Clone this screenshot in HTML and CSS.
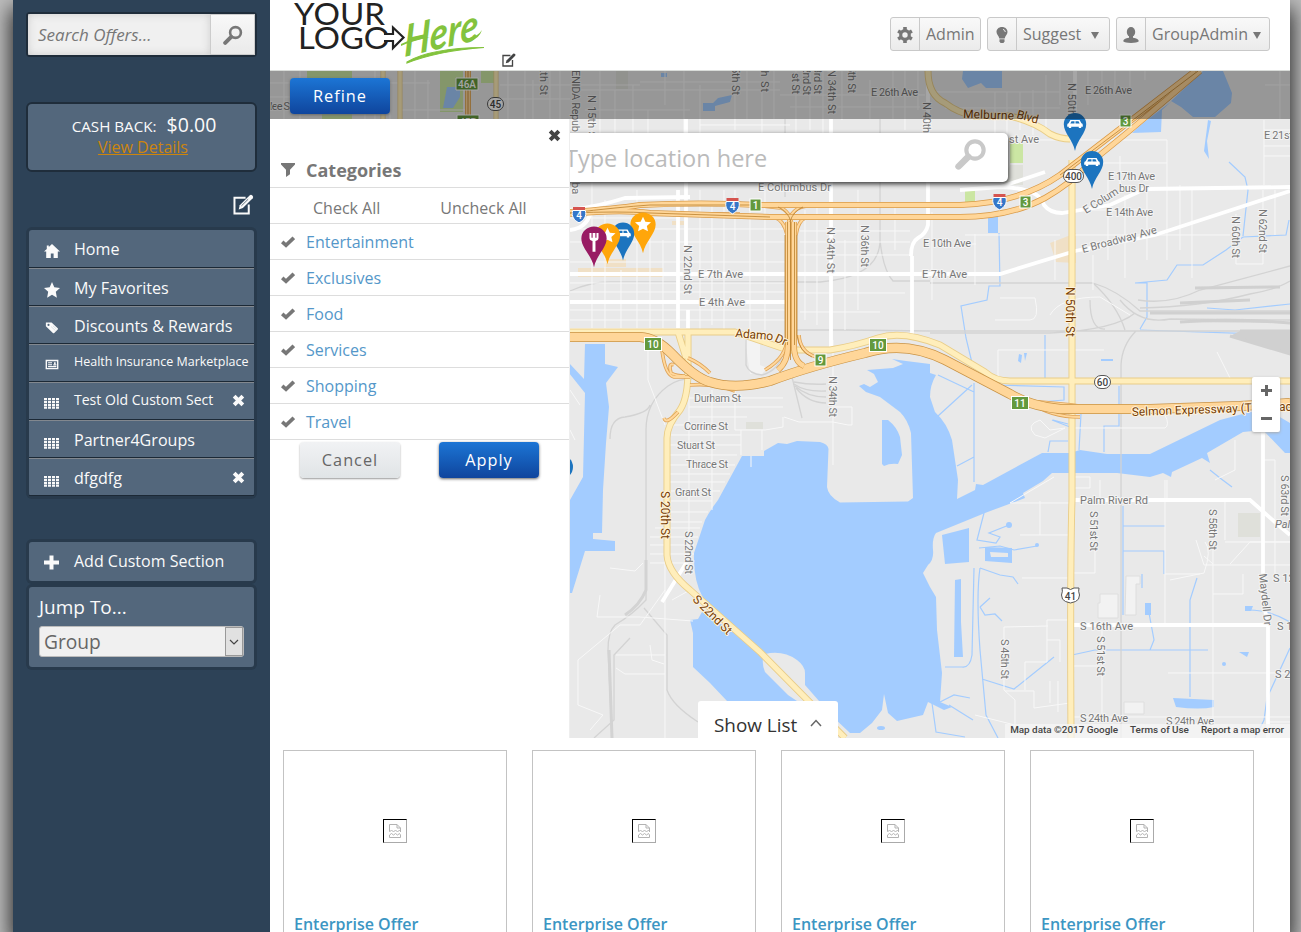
FILE: index.html
```html
<!DOCTYPE html>
<html lang="en">
<head>
<meta charset="utf-8">
<title>Offers</title>
<link rel="stylesheet" href="styles.css">
</head>
<body>
<svg class="defs" aria-hidden="true">
  <defs>
    <symbol id="i-search" viewBox="0 0 20 20"><circle cx="12.5" cy="7.5" r="5.4" fill="none" stroke="currentColor" stroke-width="2.6"/><path d="M8.2 11.8L2.2 17.8" stroke="currentColor" stroke-width="4" stroke-linecap="round"/></symbol>
    <symbol id="i-edit" viewBox="0 0 20 20"><path d="M12 3.6H1.4V18.6H15V10" fill="none" stroke="currentColor" stroke-width="1.9"/><path d="M5.4 14.7L6.4 10.6L16 1.2Q17.2 .2 18.6 1.6Q19.8 3 18.8 4L9.4 13.4z" fill="currentColor"/><path d="M8 11.3l6.4-6.3" stroke="#345" stroke-width=".7"/></symbol>
    <symbol id="i-home" viewBox="0 0 16 16"><path d="M8 1L16 8.6H13.8V15H9.6V10.6H6.8V15H2.2V8.6H0L2.8 6V2.6H4.8V4z" fill="currentColor"/></symbol>
    <symbol id="i-star" viewBox="0 0 16 16"><path d="M8 0l2.3 5.3L16 5.9l-4.2 3.9 1.1 5.9L8 12.7l-4.9 3 1.1-5.9L0 5.900l5.700-.6z" fill="currentColor"/></symbol>
    <symbol id="i-tag" viewBox="0 0 16 16"><path d="M1 2.200H7.500L14.600 8.800Q15.300 9.500 14.500 10.300L10.600 14.200Q9.800 14.900 9 14.200L1 6.600z" fill="currentColor"/><circle cx="4" cy="5" r="1.200" fill="#53677c"/><path d="M7 7l5 4.700M9 6l4 3.700" stroke="#b9c3cd" stroke-width=".6"/></symbol>
    <symbol id="i-news" viewBox="0 0 16 16"><path d="M1.500 3.500H14.500V12.700H1.500z" fill="none" stroke="currentColor" stroke-width="1.600"/><path d="M3.500 6H8M3.500 8.200H8M3.500 10.400H13M9.500 8.400H13" stroke="currentColor" stroke-width="1.200"/><path d="M10.300 5.300H12.200V8H10.300z" fill="currentColor"/></symbol>
    <symbol id="i-grid" viewBox="0 0 15 11"><path d="M0 0h3v2.300H0zM4 0h3v2.300H4zM8 0h3v2.300H8zM12 0h3v2.300h-3zM0 2.900h3v2.200H0zM4 2.900h3v2.200H4zM8 2.900h3v2.200H8zM12 2.900h3v2.200h-3zM0 5.700h3v2.200H0zM4 5.700h3v2.200H4zM8 5.700h3v2.200H8zM12 5.700h3v2.200h-3zM0 8.500h3v2.200H0zM4 8.500h3v2.200H4zM8 8.500h3v2.200H8zM12 8.500h3v2.200h-3z" fill="currentColor"/></symbol>
    <symbol id="i-x" viewBox="0 0 12 12"><path d="M2 2L10 10M10 2L2 10" stroke="currentColor" stroke-width="3.600"/></symbol>
    <symbol id="i-plus" viewBox="0 0 15 15"><path d="M7.500 .500V14.500M0 7.500H15" stroke="currentColor" stroke-width="4"/></symbol>
    <symbol id="i-gear" viewBox="0 0 16 16"><circle cx="8" cy="8" r="4.300" fill="none" stroke="currentColor" stroke-width="3.200"/><path d="M8 0v3M8 13v3M1.100 4l2.600 1.500M12.300 10.500l2.600 1.500M1.100 12l2.600-1.500M12.300 5.500L14.900 4" stroke="currentColor" stroke-width="3.600"/></symbol>
    <symbol id="i-bulb" viewBox="0 0 12 16"><path d="M6 0C2.700 0 .5 2.300.5 5.100C.5 8 3 9 3.300 11.500H8.700C9 9 11.500 8 11.500 5.100C11.500 2.300 9.300 0 6 0z" fill="currentColor"/><path d="M3.500 12.200h5v2L7.500 16h-3l-1-1.800z" fill="currentColor"/><path d="M7 2.400Q9.100 2.800 9.300 5" fill="none" stroke="#eee"/></symbol>
    <symbol id="i-user" viewBox="0 0 16 16"><ellipse cx="8" cy="5" rx="4.200" ry="5" fill="currentColor"/><path d="M6 8H10V10.800Q15.600 11.400 15.800 14.200Q14 15.900 8 15.900Q2 15.900.2 14.200Q.4 11.400 6 10.800z" fill="currentColor"/></symbol>
    <symbol id="i-filter" viewBox="0 0 14 14"><path d="M0 0H14V1.600L9 6.700V11.200L5 14V6.700L0 1.600z" fill="currentColor"/></symbol>
    <symbol id="i-check" viewBox="0 0 14 12"><path d="M1.200 5.900L5 9.300L12.800 1.800" fill="none" stroke="currentColor" stroke-width="3.700"/></symbol>
    <symbol id="i-broken" viewBox="0 0 12 14"><path d="M.5 7.500V.5H8L11.500 4V8M8 .500V4H11.500M.5 8l2-2 2 2 2-2 2 2 2-2 1 1.500M.5 11l2-1.500 2 1.500 2-1.500 2 1.500 2-1.500 1 1.500V13.500H.500z" fill="none" stroke="#b3b3b3"/></symbol>
    <path id="pin" d="M0 38C-2 27-11.200 20-11.200 11.200A11.200 11.200 0 0 1 11.200 11.200C11.200 20 2 27 0 38z"/>
    <path id="car" d="M-4.600 7.500h9.200l1.800 3.200q1.400.3 1.400 1.800v1.700H6.200v1.300H3.800v-1.300h-7.600v1.300h-2.400v-1.300h-1.600v-1.700q0-1.500 1.400-1.800zM-3.500 8.700l-1.200 2.200H-.5V8.700zM.5 8.700v2.200h4.200L3.500 8.700z" fill="#fff" fill-rule="evenodd"/>
    <path id="pinstar" d="M0 4l2.100 4.600 5 .6-3.700 3.400 1 5L0 15.200l-4.400 2.400 1-5-3.700-3.400 5-.6z" fill="#fff"/>
    <g id="shield"><path d="M-6-7H6V-4H-6z" fill="#d5544f"/><path d="M-6.300-3.500H6.300C8 2 5 6.500 0 8.800C-5 6.500-8 2-6.300-3.500z" fill="#3577c9" stroke="#fff"/><text y="4.500" class="badge-text" text-anchor="middle">4</text></g>
    <g id="exit"><rect x="-5.500" y="-6" width="11" height="12" fill="#63993d" stroke="#fff"/></g>
    <g id="exit2"><rect x="-8.500" y="-6.500" width="17" height="13" fill="#63993d" stroke="#fff"/></g>
  </defs>
</svg>

<div class="page">
  <aside class="sidebar">
    <div class="search">
      <span class="search-text">Search Offers...</span>
      <span class="search-btn"><svg class="ic20"><use href="#i-search"/></svg></span>
    </div>
    <div class="cash">
      <div class="cash-line"><span>CASH BACK:</span><b>$0.00</b></div>
      <a class="cash-link">View Details</a>
    </div>
    <div class="side-edit"><svg class="ic21"><use href="#i-edit"/></svg></div>
    <nav class="menu">
      <a class="item"><svg class="ic16"><use href="#i-home"/></svg><span>Home</span></a>
      <a class="item"><svg class="ic16"><use href="#i-star"/></svg><span>My Favorites</span></a>
      <a class="item"><svg class="ic14"><use href="#i-tag"/></svg><span>Discounts &amp; Rewards</span></a>
      <a class="item small"><svg class="ic14"><use href="#i-news"/></svg><span>Health Insurance Marketplace</span></a>
      <a class="item medium"><svg class="icgrid"><use href="#i-grid"/></svg><span>Test Old Custom Sect</span><svg class="del"><use href="#i-x"/></svg></a>
      <a class="item"><svg class="icgrid"><use href="#i-grid"/></svg><span>Partner4Groups</span></a>
      <a class="item"><svg class="icgrid"><use href="#i-grid"/></svg><span>dfgdfg</span><svg class="del"><use href="#i-x"/></svg></a>
    </nav>
    <div class="add"><svg class="ic15"><use href="#i-plus"/></svg><span>Add Custom Section</span></div>
    <div class="jump">
      <div class="jump-title">Jump To...</div>
      <div class="select"><span>Group</span><i><svg width="10" height="6"><path d="M1 1l4 4 4-4" fill="none" stroke="#444" stroke-width="1.200"/></svg></i></div>
    </div>
  </aside>

  <main class="main">
    <header class="header">
      <svg class="logo" width="200" height="70" viewBox="290 0 200 70">
        <g class="logo-text"><text x="294" y="25" textLength="91" lengthAdjust="spacingAndGlyphs">YOUR</text><text x="298" y="49" textLength="92" lengthAdjust="spacingAndGlyphs">LOGO</text></g>
        <path d="M384 34H393V27.500L403.500 37.500L393 48V41H384" fill="#fff" stroke="#222" stroke-width="2.200"/>
        <text class="logo-here" transform="translate(404 57) rotate(-13) skewX(-14)" textLength="76" lengthAdjust="spacingAndGlyphs">Here</text>
        <path d="M401 44Q412 38 430 37Q412 41 401 46zM470 38Q478 36 482 30Q479 39 470 41z" fill="#83c33d"/>
        <path d="M407 62Q430 48 484 47.500Q438 51 407 63z" fill="#83c33d" stroke="#83c33d" stroke-width="1.200"/>
      </svg>
      <svg class="logo-edit"><use href="#i-edit"/></svg>
      <div class="tools">
        <a class="tool"><i><svg class="ic16"><use href="#i-gear"/></svg></i><span class="t-admin">Admin</span></a>
        <a class="tool"><i><svg class="icbulb"><use href="#i-bulb"/></svg></i><span class="t-suggest">Suggest <em></em></span></a>
        <a class="tool"><i><svg class="ic16"><use href="#i-user"/></svg></i><span class="t-group">GroupAdmin<em></em></span></a>
      </div>
    </header>

    <section class="map">
      <svg class="map-canvas" width="1020" height="667" viewBox="270 71 1020 667">
        <rect x="270" y="71" width="1020" height="667" fill="#e9e9e9"/>
        <!-- parks and blocks -->
        <path d="M307 71h45v49h-30v-22h-15zM440 71h23v41h-23zM481 71h14v12h-14zM1010 143h13v20h-13zM965 190h10v12h-10z" fill="#cbe6a3"/>
        <path d="M1010 165h13v20h-20v-6zM746 422h17v7h-17zM616 71h12v18h-12zM1238 513h22v24h-22z" fill="#dfe0da"/>
        <path d="M578 268h85v9h-85zM604 259h22v8h-22zM672 221h12v4h-12zM1050 243l26-10v30l-20-1z" fill="#f0e0c6"/>
        <path d="M1100 594h18v24h-20v-15h2zM1126 576h14v8h-4v31h-11zM1124 702h20v12h-20z" fill="#f2f2f2" stroke="#dedede"/>
        <path d="M745 340h15v25l7 3-5 6h-12z" fill="#f3f3f3"/>
        <!-- water -->
        <g class="water">
          <path d="M705 520Q709 512 718 500L742 456H764V451L778 443L787 444L797 441L820 442Q828 444 828.500 449L827 487Q828 496 840 502.500L908 501.500L913 498L911 433Q908 420 900 412L880 397L866 392L859 386L864 384L870 387L878 382L874 374L867 370L893 368L903 364L892 359L906 361L930 364V373L936 375Q930 385 930 397L935 412Q947 423 952 440L958 480L957 499L975 490L976 484L983 485L1042 453L1070 453L1080 450L1107 454H1150L1220 420L1250 412L1273 413L1290 423V453L1285 453L1263 430L1243 432L1207 453L1210 463L1202 458L1172 472L1171 477L1163 473L1150 477L1117 473L1052 473L1043 481L1023 493L1025 498L985 513L963 522L936 533Q932 538 933 550Q934 560 928 565L923 573L930 587L936 597L937 630L942 673L940 702L952 707L944 710L928 702L923 715L897 721L888 713L884 694L882 710L872 723L860 733H850L833 717L805 685V673Q805 666 797 660Q783 650 765 654L733 630L703 598Q693 580 694 553z"/>
          <path d="M702 612L698 619L690 620L693 633V667L710 683L727 701L760 730H815L797 701L788 695L765 672Q762 665 763 658L733 632z"/>
          <path d="M585 344h20v20l13 3-12 16 3 24-3 36-3 47-1 43h-9v6l22 2v10h-30l-13 42h-2v-93l13-23 2-84-16-20v-10l15 16z"/>
          <path d="M882 420h6q9 7 12 17l2 18-4 9q-8-1-14 2l-2-2z"/>
          <path d="M942 535l27-7v34l-24 2zM985 547l27 1v15l-27-2zM955 580l6-1v43l2 35h-9zM963 71h39v17h-16l-5-5-13 5-6-9zM1203 71h20l9 22-1 10-16 14h-22l-12-10-10-6zM1172 101l-10 9-1 22-29 1 11-10zM1208 120l3 1-4 20 2 18-5-8zM988 215h10v18h-10zM703 103h10l5-5 14-3-2 7-15 4v5h-12zM447 87h13v10l-7 11h-10zM661 73h6v4h-6zM1173 698l41 2v7q-14 3-38 0zM1145 603h6v12h-6zM1239 652h10l-2 5zM1245 606h8l-2 5h-6zM1101 359h12v2h-12zM1019 354l3 1-1 8-3-2zM1024 353h3l-2 8z"/>
          <circle cx="1009" cy="525" r="3"/><circle cx="1037" cy="545" r="2"/><circle cx="1224" cy="664" r="2"/><ellipse cx="881" cy="728" rx="4" ry="2"/>
        </g>
        <path d="M990 552l18 1v4h-17z" fill="#e9e9e9"/>
        <path class="creek" d="M999 233L1000 286H989L987 300L961 306L966 338L973 367M1229 162L1245 177L1248 190L1243 236M1243 237L1286 235L1289 220M1243 237L1226 250L1203 265H1177L1167 280L1135 283H1147V317L1140 329M1140 330L1290 335M1207 308L1235 310L1290 304M1045 335V378M993 385L1064 387V400L1040 402M1119 386V426H1104V452M1081 414L1079 450M974 383V482M974 392L938 375M938 416L972 385M974 457L957 466M1123 506V615M1123 526H1165M1123 551H1164V574M1142 574v14M1197 578L1190 600V697M1149 613L1154 640L1150 650M1054 657L1014 689L982 679M1072 655L1095 650H1208M980 568Q976 595 980 650L986 715L998 738M980 568L1000 575L1013 577L1018 584M980 607L990 598M980 607L985 615L995 614L1002 621M974 568L972 655Q970 668 962 667H945M940 702L954 695L970 698M949 705L973 720M932 703L936 732L965 737M984 513L977 540L996 543L1000 537L989 533L1009 525M979 548L1000 546L1014 550L1037 546M1290 648L1267 698L1264 720L1255 738M1290 622Q1270 610 1249 610M1210 470L1220 478L1232 487M1068 441H1050L1048 452M1052 420L1070 427M1053 420L1068 424"/>
        <!-- rail -->
        <path class="rail" d="M646 530V600Q632 615 615 625Q608 632 608 650L612 738M646 530L646 430Q646 402 668 386Q680 377 700 379M570 331H610M785 330H845L930 331H1290M930 283H1093Q1117 290 1140 311H1290M1093 283Q1117 305 1125 330M1135 313Q1115 330 1050 333H930M1140 308Q1200 307 1250 294Q1275 290 1290 281M1138 300Q1170 305 1200 290L1290 266M1120 300Q1140 325 1170 319L1290 320M1121 365V738M1121 365Q1122 345 1136 331M610 439Q610 418 625 417Q648 413 650 405M792 377L802 418M644 608L667 635V690Q672 705 698 722M746 340V365Q749 374 762 375Q780 370 784 350M570 291Q590 282 610 282H820Q880 277 880 240V119M785 197V119M880 240Q883 270 893 281H930M630 638L614 655V720L594 738M1090 300Q1090 330 1105 329"/>
        <path class="rail heavy" d="M646 560V590Q640 605 625 615M609 650L612 738"/>
        <path class="railyard" d="M1150 313L1290 313M1180 322Q1230 318 1290 323M1180 303L1250 300M1240 331H1290L1290 354L1230 336M1195 288L1280 287"/>
        <path class="rail" d="M794 382Q810 385 826 384M794 384Q805 392 826 391M795 386Q807 397 826 397M796 388Q808 403 826 403"/>
        <!-- minor streets -->
        <path class="street" d="M570 218H680M570 229H790M570 242H790M570 262H785M570 283H785M570 292H785M570 310H785M570 320H785M592 130V330M605 200V330M621 270V330M637 190V330M650 225V330M663 240V330M700 190V330M712 205V325M724 190V330M735 190V250M750 208V330M765 190V330M805 210V320M817 205V325M845 240V330M858 190V310M895 205V250M800 231H910M800 242H910M800 255H910M800 293H905M800 312H880M932 212V300M975 234V285M965 244H976M1055 240V280M965 235H1060M1093 255V290M1108 180V260M1125 195V278M1147 190V260M1167 140V260M1180 185V250M1192 190V278M1040 140H1167M1074 163H1167M1120 156V185M1080 210H1150M1074 235H1230M1236 214V264H1263V190M1264 130H1290M1264 146H1290M1264 156H1290M1264 120V185M1275 190V235"/>
        <path class="street" d="M270 83H430M270 97H305M284 71V119M300 71V119M365 80V119M375 71V119M390 82V119M415 71V119M428 80V119M400 110H465M500 85H640M500 99H570M508 71V119M525 71V119M533 80V119M550 71V119M560 71V119M578 90H780M585 110H690M600 71V140M615 90V135M633 85V140M648 110V140M665 71V105M684 71V180M700 85V140M735 71V130M747 71V119M762 90V150M774 71V119M796 71V140M810 71V130M823 71V135M842 71V120M870 80V119M893 71V119M905 71V130M918 71V110M640 82H780M780 95H925M790 107H920M700 125H790M930 92H1060M945 108H1060M995 92V160M1007 92V165M1020 92V130M1033 90V135M1046 75V130M1060 71V105M1088 71V105M1102 71V90M1115 71V90M1130 71V90M1145 71V80M1265 85H1290M1280 71V119"/>
        <path class="street" d="M689 398H783M689 407H783M689 417H747M671 425H688M671 435H741M670 445H741M668 455H737M668 465H735M668 474H730M668 482H725M668 491H720M668 501H712M668 512H708M668 522H702M655 528H700M650 537H698M650 545H694M650 554H694M650 563H690M689 388V560M712 390V510M735 385V430H765L783 427M741 430V455M784 417L799 422H833L848 425H852V407H834M833 340V465M751 456v11M762 430V450M783 417V427M665 430V740M648 338V380L665 425M570 390L580 405M570 430L575 440M665 590L640 625H620L578 660V705L603 715L590 730M600 595L597 617H640L693 621M610 568L635 571L643 563M616 655H665M616 668L625 674H665M650 645L652 660L664 664M672 600L690 590"/>
        <path class="street" d="M998 350H1104M998 350V378M1070 428H1165Q1170 425 1165 415M1040 420L1050 430L1065 428M1040 420Q1025 425 1035 435L1045 438L1065 428M1074 477h16v11h-16zM1054 477L1010 503H1070M1040 501V535M1020 535H1070M1100 480V500M1167 480V500M1235 440V470L1215 480M1263 460H1275V580M1225 500V540M1213 540V730M1196 540L1204 565H1290M1204 556L1213 564M1213 594H1243V574M1205 542Q1212 550 1204 573M1165 574H1200M1204 573L1170 580M1230 564L1250 542H1290M1095 550V573H1072M1022 578H1069M1047 620H1070M1047 620V662H1025M1004 627L1048 626M1004 627V690L1015 700V730M1005 691H1034V708L1070 703M1025 662V690M1047 640H1060V662M1050 681V703M1058 681V712M1102 630V715M1072 666H1100M1168 673H1290M1165 480V623M1070 717H1290M1270 722H1290M1217 352L1230 378M1225 542H1290M1130 315L1100 297Q1060 297 1050 315M1000 298H1035Q1040 320 1030 320H995M975 715L1015 725"/>
        <path class="street wide" d="M570 274H930M570 302H790M570 330H690M678 190V330M688 310V332M686 119V140M686 182V250M831 119V348M912 256V335M570 210Q600 206 625 198L690 197M570 230Q590 228 592 205M1075 71V113M960 190L1000 187Q1040 188 1044 205Q1050 213 1062 213L1110 205L1145 189L1290 187M930 274H1000L1075 251L1155 235L1290 191M1000 187L1045 172M1072 625H1268V738M1072 500H1250L1276 523L1290 535M1263 430V600L1268 625M688 560L662 602"/>
        <path class="street wide" d="M928 71V225Q926 234 918 238Q911 242 911 256"/>
        <!-- arterial roads -->
        <path class="y-case" d="M570 332H735L788 350M790 350H830Q855 346 878 338Q903 330 940 345L985 372Q995 381 1010 381H1290M678 332L686 358M688 332V370Q688 398 680 410Q667 425 667 438V555Q668 572 690 590L760 652L845 738M1072 160V340L1072 500Q1070 560 1071 738M928 71Q928 95 945 103Q958 113 975 116L1010 116Q1035 122 1050 134Q1060 139 1070 139"/>
        <path class="y-road" d="M570 332H735L788 350M790 350H830Q855 346 878 338Q903 330 940 345L985 372Q995 381 1010 381H1290M678 332L686 358M688 332V370Q688 398 680 410Q667 425 667 438V555Q668 572 690 590L760 652L845 738M1072 160V340L1072 500Q1070 560 1071 738M928 71Q928 95 945 103Q958 113 975 116L1010 116Q1035 122 1050 134Q1060 139 1070 139"/>
        <path class="y-case thin" d="M383 71V119M400 71V119M496 71V119"/>
        <path class="y-road thin" d="M383 71V119M400 71V119M496 71V119"/>
        <!-- expressways -->
        <path class="ramp-case" d="M662 350Q665 375 674 377L690 377M674 365Q668 362 671 373Q676 376 685 376M688 358Q700 363 710 373M690 385Q715 383 735 391M787 338Q787 357 765 370M799 335Q800 352 816 357M678 412Q666 425 664 418M774 206Q790 208 792 225M807 206Q790 208 788 225M774 217Q784 220 787 235M807 217Q798 220 796 235M1030 402Q1050 417 1080 417M1030 401Q1070 404 1110 410M735 203Q755 205 780 208M690 214H740"/>
        <path class="ramp" d="M662 350Q665 375 674 377L690 377M674 365Q668 362 671 373Q676 376 685 376M688 358Q700 363 710 373M690 385Q715 383 735 391M787 338Q787 357 765 370M799 335Q800 352 816 357M678 412Q666 425 664 418M774 206Q790 208 792 225M807 206Q790 208 788 225M774 217Q784 220 787 235M807 217Q798 220 796 235M1030 402Q1050 417 1080 417M1030 401Q1070 404 1110 410M735 203Q755 205 780 208M690 214H740"/>
        <path class="o-case" d="M570 337H640Q657 338 672 354Q695 378 710 382Q735 390 770 381Q810 366 865 353Q905 340 945 360L1010 394Q1030 406 1060 409H1150L1240 406L1290 403"/>
        <path class="o-road" d="M570 337H640Q657 338 672 354Q695 378 710 382Q735 390 770 381Q810 366 865 353Q905 340 945 360L1010 394Q1030 406 1060 409H1150L1240 406L1290 403"/>
        <path class="i-case" d="M570 212Q615 209 640 205Q700 202 760 205L960 205Q1020 203 1060 175L1195 71M570 214Q620 209 650 213L770 217H960Q1010 217 1045 198Q1070 184 1090 163L1128 132L1200 71M788 222V345Q788 362 778 370M794 222V345Q794 362 804 366M468 71V119"/>
        <path class="i-road" d="M570 212Q615 209 640 205Q700 202 760 205L960 205Q1020 203 1060 175L1195 71M570 214Q620 209 650 213L770 217H960Q1010 217 1045 198Q1070 184 1090 163L1128 132L1200 71M788 222V345Q788 362 778 370M794 222V345Q794 362 804 366M468 71V119"/>
        <path class="i-line" d="M570 213Q620 207 650 205L760 205M570 213Q620 211 650 213L770 217M787.500 222V345M790.500 222V360M794.500 222V345M785 235V345M797 235V335Q799 352 812 357M1060 175L1198 71M468 71V119M778 207Q788 211 791 222M803 207Q793 211 790 222"/>
        <!-- street names -->
        <g class="label">
          <text x="270" y="110" textLength="20">lee S</text>
          <text x="871" y="96" textLength="47">E 26th Ave</text>
          <text x="1085" y="93.500" textLength="47">E 26th Ave</text>
          <text x="1009" y="143" textLength="30">st Ave</text>
          <text x="758" y="191" textLength="73">E Columbus Dr</text>
          <text x="923" y="246.500" textLength="48">E 10th Ave</text>
          <text x="698" y="277.500" textLength="45">E 7th Ave</text>
          <text x="922" y="277.500" textLength="45">E 7th Ave</text>
          <text x="699" y="306" textLength="46">E 4th Ave</text>
          <text x="1108" y="180" textLength="47">E 17th Ave</text>
          <text x="1106" y="216" textLength="47">E 14th Ave</text>
          <text x="1264" y="139" textLength="38">E 21st A</text>
          <text transform="translate(1086 214) rotate(-32)" textLength="39">E Colum</text>
          <text x="1119" y="192" textLength="30">bus Dr</text>
          <text transform="translate(1083 253) rotate(-15)" textLength="77">E Broadway Ave</text>
          <text x="694" y="402" textLength="47">Durham St</text>
          <text x="684" y="430" textLength="44">Corrine St</text>
          <text x="677" y="449" textLength="38">Stuart St</text>
          <text x="686" y="468" textLength="42">Thrace St</text>
          <text x="675" y="496" textLength="36">Grant St</text>
          <text x="1080" y="504" textLength="68">Palm River Rd</text>
          <text x="1275" y="528" font-style="italic">Pal</text>
          <text x="1080" y="630" textLength="53">S 16th Ave</text>
          <text x="1080" y="721.500" textLength="48">S 24th Ave</text>
          <text x="1166" y="724.500" textLength="48">S 24th Ave</text>
          <text x="1273" y="582">S 12</text><text x="1277" y="630">S 1</text><text x="1275" y="678">S 2</text>
          <text transform="translate(540 66) rotate(90)" textLength="29">2th St</text>
          <text transform="translate(572 70) rotate(90)" textLength="62">ENIDA Repub</text>
          <text transform="translate(572 182) rotate(90)">ba</text>
          <text transform="translate(588 95) rotate(90)" textLength="43">N 15th S</text>
          <text transform="translate(732 67) rotate(90)" textLength="28">5th St</text>
          <text transform="translate(761 66) rotate(90)" textLength="26">th St</text>
          <text transform="translate(792 73) rotate(90)" textLength="21">st St</text>
          <text transform="translate(803 67) rotate(90)" textLength="28">2nd St</text>
          <text transform="translate(814 67) rotate(90)" textLength="27">3rd St</text>
          <text transform="translate(828 69) rotate(90)" textLength="45">N 34th St</text>
          <text transform="translate(848 66) rotate(90)" textLength="27">5th St</text>
          <text transform="translate(923 102) rotate(90)" textLength="43">N 40th St</text>
          <text transform="translate(1068 83) rotate(90)" textLength="46">N 50th St</text>
          <text transform="translate(684 245) rotate(90)" textLength="49">N 22nd St</text>
          <text transform="translate(827 227) rotate(90)" textLength="46">N 34th St</text>
          <text transform="translate(861 225) rotate(90)" textLength="42">N 36th St</text>
          <text transform="translate(829 376) rotate(90)" textLength="41">N 34th St</text>
          <text transform="translate(685 531) rotate(90)" textLength="43">S 22nd St</text>
          <text transform="translate(1232 216) rotate(90)" textLength="42">N 60th St</text>
          <text transform="translate(1259 209) rotate(90)" textLength="44">N 62nd St</text>
          <text transform="translate(1281 475) rotate(90)" textLength="41">S 63rd St</text>
          <text transform="translate(1090 511) rotate(90)" textLength="40">S 51st St</text>
          <text transform="translate(1209 509) rotate(90)" textLength="41">S 58th St</text>
          <text transform="translate(1097 636) rotate(90)" textLength="40">S 51st St</text>
          <text transform="translate(1001 639) rotate(90)" textLength="40">S 45th St</text>
          <text transform="translate(1259 574) rotate(84)" textLength="52">Maydell Dr</text>
        </g>
        <g class="label brown">
          <text transform="translate(963 118) rotate(2)" textLength="51">Melburne</text>
          <text transform="translate(1016 118) rotate(15)" textLength="22">Blvd</text>
          <text transform="translate(735 337) rotate(5)" textLength="38">Adamo</text>
          <text transform="translate(774 341) rotate(25)">Dr</text>
          <text transform="translate(1066 287) rotate(90)" textLength="50">N 50th St</text>
          <text transform="translate(661 491) rotate(90)" textLength="48">S 20th St</text>
          <text transform="translate(692 600) rotate(45)" textLength="50">S 22nd St</text>
          <text transform="translate(1132 416) rotate(-2)" textLength="120">Selmon Expressway (T</text>
          <text x="1279" y="411">ac</text>
        </g>
        <!-- route signs -->
        <use href="#shield" x="579" y="214"/><use href="#shield" x="732.500" y="205"/><use href="#shield" x="999.500" y="201"/>
        <use href="#exit" x="755.500" y="205"/><use href="#exit" x="1025.500" y="202"/><use href="#exit" x="1125.500" y="121"/><use href="#exit" x="820.500" y="360"/>
        <use href="#exit2" x="653" y="344"/><use href="#exit2" x="878" y="345"/><use href="#exit2" x="1020" y="403"/>
        <path d="M456 78h22v12h-22zM457 115h22v12h-22z" fill="#63993d" stroke="#fff"/>
        <g class="badge-text" text-anchor="middle"><text x="755.500" y="209">1</text><text x="1025.500" y="206">3</text><text x="1125.500" y="125">3</text><text x="820.500" y="364">9</text><text x="653" y="348">10</text><text x="878" y="349">10</text><text x="1020" y="407">11</text><text x="467" y="88">46A</text><text x="468" y="126">45B</text></g>
        <g fill="#fff" stroke="#555"><rect x="487.500" y="97.500" width="16" height="13" rx="6.500"/><rect x="1063.500" y="169.500" width="20" height="13" rx="6.500"/><rect x="1094.500" y="375.500" width="16" height="13" rx="6.500"/><path d="M1062 588h5l3.500 1.500 3.500-1.500h5q-1 3 .5 7 0 5-4 6.500l-5 1.500-5-1.500q-4-1.500-4-6.500 1.500-4 .5-7z"/></g>
        <g class="route" text-anchor="middle"><text x="495.500" y="107.500">45</text><text x="1073.500" y="179.500">400</text><text x="1102.500" y="385.500">60</text><text x="1070.500" y="599.500">41</text></g>
        <!-- offer pins -->
        <g transform="translate(1075 113)"><use href="#pin" fill="#1c74bf"/><use href="#car" y="-.5"/></g>
        <g transform="translate(1092 151)"><use href="#pin" fill="#1c74bf"/><use href="#car" y="-.5"/></g>
        <circle cx="561" cy="467" r="12" fill="#1c74bf"/>
        <g transform="translate(643 212.500) scale(1.130 1.070)"><use href="#pin" fill="#ffa60a"/><use href="#pinstar"/></g>
        <g transform="translate(623 222.500)"><use href="#pin" fill="#1c74bf"/><use href="#car" y="-.5"/></g>
        <g transform="translate(607.500 223.500) scale(1.130 1.070)"><use href="#pin" fill="#ffa60a"/><use href="#pinstar"/></g>
        <g transform="translate(594 226.500) scale(1.130 1.070)"><use href="#pin" fill="#981b63"/><path d="M-4 6v4.500q0 2.500 2.700 3V23.500h2.600V13.500Q4 13 4 10.500V6z" fill="#fff"/><path d="M-1.700 5.500v5M1.700 5.500v5" stroke="#981b63" stroke-width="1"/></g>
      </svg>
      <div class="location"><span>Type location here</span><svg><use href="#i-search"/></svg></div>
      <div class="refine-bar"><a class="btn blue">Refine</a></div>
      <div class="panel">
        <div class="panel-close"><svg><use href="#i-x"/></svg></div>
        <div class="panel-title"><svg><use href="#i-filter"/></svg><span>Categories</span></div>
        <div class="panel-all"><span>Check All</span><span>Uncheck All</span></div>
        <div class="cat"><svg><use href="#i-check"/></svg><span>Entertainment</span></div>
        <div class="cat"><svg><use href="#i-check"/></svg><span>Exclusives</span></div>
        <div class="cat"><svg><use href="#i-check"/></svg><span>Food</span></div>
        <div class="cat"><svg><use href="#i-check"/></svg><span>Services</span></div>
        <div class="cat"><svg><use href="#i-check"/></svg><span>Shopping</span></div>
        <div class="cat"><svg><use href="#i-check"/></svg><span>Travel</span></div>
        <div class="panel-actions"><a class="btn gray">Cancel</a><a class="btn blue">Apply</a></div>
      </div>
      <div class="zoom"><i class="plus"></i><i class="minus"></i></div>
      <div class="show-list"><span>Show List</span><svg width="12" height="8"><path d="M1 7l5-5.500L11 7" fill="none" stroke="#666" stroke-width="1.500"/></svg></div>
      <div class="attribution"><span>Map data ©2017 Google</span><span>Terms of Use</span><span>Report a map error</span></div>
    </section>

    <section class="offers">
      <article class="card"><div class="thumb"><svg><use href="#i-broken"/></svg></div><h3>Enterprise Offer</h3></article>
      <article class="card"><div class="thumb"><svg><use href="#i-broken"/></svg></div><h3>Enterprise Offer</h3></article>
      <article class="card"><div class="thumb"><svg><use href="#i-broken"/></svg></div><h3>Enterprise Offer</h3></article>
      <article class="card"><div class="thumb"><svg><use href="#i-broken"/></svg></div><h3>Enterprise Offer</h3></article>
    </section>
  </main>
</div>
</body>
</html>
```

FILE: styles.css
```css
* { box-sizing: border-box; }
body { margin: 0; height: 932px; overflow: hidden; background: #bebebe; font: 16px/22px "Open Sans", sans-serif; color: #777; }
svg { display: block; flex: none; }
.defs { position: absolute; width: 0; height: 0; }
.page { display: flex; width: 1277px; height: 932px; margin-left: 13px; background: #fff; box-shadow: 0 10px 20px 2px #222; }

.sidebar { width: 257px; padding: 12px 13px 0 14px; background: #2d4257; color: #fafafa; }
.ic20 { width: 20px; height: 20px; }
.ic21 { width: 21px; height: 21px; }
.ic16 { width: 16px; height: 16px; }
.ic15 { width: 15px; height: 15px; }
.ic14 { width: 14px; height: 15px; }
.icgrid { width: 15px; height: 11px; }
.icbulb { width: 12px; height: 16px; }

.search { display: flex; width: 231px; height: 45px; margin-left: -1px; border: 2px solid #1f2d3b; border-radius: 4px; background: #f0f0f0; color: #777; }
.search-text { flex: 1; padding: 10px 0 0 10px; font-size: 17px; font-style: italic; box-shadow: inset 0 0 8px #ccc; }
.search-btn { display: flex; align-items: center; justify-content: center; width: 45px; border: 1px solid #ccc; background: linear-gradient(#f8f8f8, #eaeaea); }
.cash { width: 231px; height: 70px; margin: 45px 0 0 -1px; padding: 9px 0 0 5px; border: 2px solid #1f2d3b; border-radius: 6px; background: #53677c; text-align: center; }
.cash-line { display: flex; justify-content: center; align-items: baseline; gap: 10px; height: 23px; font-size: 15.200px; line-height: 24px; }
.cash-line b { font-size: 19.500px; font-weight: 400; }
.cash-link { position: relative; left: -1px; color: #cc850d; text-decoration: underline; font-size: 16px; }
.side-edit { display: flex; justify-content: flex-end; height: 58px; padding: 22px 3px 0 0; }
.menu { width: 225px; margin-left: 2px; border-radius: 3px; background: #53677c; box-shadow: 0 0 0 3px #283a4c; }
.item { display: flex; align-items: center; height: 38px; padding: 1px 10px 0 15px; border-top: 1px solid #82888f; border-bottom: 1px solid #1c2936; font-size: 16.100px; white-space: nowrap; }
.item:first-child { border-top: 0; }
.item > svg:first-child { margin: 4px 0 0; }
.item > span { width: 155px; margin-left: 14px; flex: none; }
.item > .ic14:first-child { margin-left: 1px; margin-right: 1px; }
.item > .icgrid:first-child { margin-right: 1px; margin-top: 7px; }
.item > .del { width: 13px; height: 13px; margin-left: 3px; }
.item.small { font-size: 12.500px; padding-bottom: 4px; }
.item.small > .ic14:first-child { margin-top: 6px; }
.item.medium { font-size: 14.050px; padding-bottom: 3px; }
.add { display: flex; align-items: center; width: 225px; height: 39px; margin: 46px 0 0 2px; padding: 0 0 2px 15px; border-radius: 3px; background: #53677c; box-shadow: 0 0 0 3px #283a4c; font-size: 16px; }
.add svg { margin: 4px 15px 0 0; }
.jump { width: 225px; height: 80px; margin: 6px 0 0 2px; padding: 9px 10px; border-radius: 3px; background: #53677c; box-shadow: 0 0 0 3px #283a4c; }
.jump-title { height: 30px; font-size: 19px; }
.select { display: flex; justify-content: space-between; height: 31px; padding-left: 4px; border: 1px solid #bbb; border-radius: 3px; background: #f0f0f0; color: #666; font-size: 19.200px; line-height: 30px; }
.select i { display: flex; align-items: center; justify-content: center; width: 18px; border: 1px solid #999; background: #e1e1e1; }

.main { width: 1020px; }
.header { display: flex; height: 71px; padding-left: 20px; border-bottom: 1px solid #d9dcd9; }
.logo-text { font: 400 31px Lato, sans-serif; fill: #222; }
.logo-here { font: italic 700 43px Lato, sans-serif; fill: #83c33d; }
.logo-edit { width: 14px; height: 14px; margin: 53px 0 0 12px; color: #444; }
.tools { display: flex; gap: 6px; margin: 17px 20px 0 auto; }
.tool { display: flex; height: 34px; border: 1px solid #c9c9c9; border-radius: 3px; background: linear-gradient(#f9f9f9, #ebebeb); font-size: 16px; line-height: 32px; }
.tool i { display: flex; align-items: center; justify-content: center; width: 29px; border-right: 1px solid #c9c9c9; padding-top: 2px; }
.tool span { padding: 0 6px; white-space: nowrap; }
.tool em { display: inline-block; border: 4px solid transparent; border-top: 7px solid #777; border-bottom: 0; vertical-align: 1px; }
.t-admin { width: 60px; }
.t-suggest { width: 92px; }
.t-suggest em { margin-left: 6px; }
.t-group { width: 123px; }
.t-group em { margin-left: 5px; }

.map { position: relative; height: 667px; overflow: hidden; }
.water { fill: #a3ccff; }
.creek { fill: none; stroke: #a3ccff; stroke-width: 1.200; }
.rail { fill: none; stroke: #d3d3d3; stroke-width: 1.300; }
.rail.heavy { stroke-width: 3; }
.railyard { fill: #d0d0d0; stroke: #d0d0d0; stroke-width: 3; }
.street { fill: none; stroke: #f8f8f8; stroke-width: 1; }
.street.wide { stroke: #fff; stroke-width: 3.800; }
.y-case, .y-road, .ramp-case, .ramp, .o-case, .o-road, .i-case, .i-road, .i-line { fill: none; stroke-linejoin: round; }
.y-case { stroke: #e9cd88; stroke-width: 7; }
.y-road { stroke: #ffeebb; stroke-width: 5.200; }
.y-case.thin { stroke-width: 5; }
.y-road.thin { stroke-width: 3.500; }
.ramp-case { stroke: #dfa357; stroke-width: 3.600; }
.ramp { stroke: #ffd79b; stroke-width: 2; }
.o-case { stroke: #c99345; stroke-width: 10; }
.o-road { stroke: #ffd699; stroke-width: 8.600; }
.i-case { stroke: #d99a47; stroke-width: 6; }
.i-road { stroke: #ffd699; stroke-width: 4.600; }
.i-line { stroke: #b9802f; stroke-width: .8; }
.label { font: 11px Roboto, sans-serif; fill: #777; stroke: #f4f4f4; stroke-width: 2px; paint-order: stroke; stroke-linejoin: round; }
.label.brown { font-size: 12px; fill: #773e04; stroke: #fff3dc; }
.badge-text { font: 500 10px Roboto, sans-serif; fill: #fff; }
.route { font: 500 10px Roboto, sans-serif; fill: #444; }

.location { position: absolute; left: 280px; top: 62px; display: flex; align-items: center; justify-content: space-between; width: 458px; height: 49px; padding: 0 21px 0 15px; border-radius: 5px; background: #fff; box-shadow: 1px 2px 5px #333; color: #bbb; font-size: 23.500px; }
.location svg { width: 32px; height: 32px; margin-top: -7px; color: #c9c9c9; }
.refine-bar { position: absolute; left: 0; top: 0; width: 1020px; height: 48px; padding: 7px 20px; background: rgba(0, 0, 0, .35); }
.btn { display: block; width: 100px; height: 36px; border-radius: 4px; font-size: 16.300px; line-height: 36px; letter-spacing: 1px; text-align: center; box-shadow: 0 1px 3px #666; }
.blue { color: #fff; background: linear-gradient(#1c75d5, #0f459d); }
.gray { color: #666; background: linear-gradient(#f1f2f4, #e0e4e6); box-shadow: 0 1px 2px #999; }
.panel { position: absolute; left: 0; top: 48px; width: 300px; height: 619px; border-right: 1px solid #eee; background: #fff; }
.panel-close { display: flex; justify-content: flex-end; height: 33px; padding: 10px 8px 0 0; color: #444; }
.panel-close svg { width: 13px; height: 13px; }
.panel-title { display: flex; align-items: center; height: 36px; padding-left: 11px; border-bottom: 1px solid #ddd; font-size: 18px; font-weight: 700; }
.panel-title svg { width: 14px; height: 14px; margin-right: 11px; }
.panel-all { display: flex; gap: 60px; height: 36px; padding: 9px 0 0 43px; border-bottom: 1px solid #ddd; }
.cat { display: flex; align-items: center; height: 36px; padding-left: 11px; border-bottom: 1px solid #ddd; color: #5497c9; }
.cat svg { width: 14px; height: 12px; margin-right: 11px; color: #777; }
.panel-actions { display: flex; gap: 39px; padding: 2px 0 0 30px; }
.zoom { position: absolute; left: 982px; top: 306px; width: 28px; height: 55px; border-radius: 2px; background: #fff; box-shadow: 0 1px 3px #aaa; display: grid; grid-template-rows: 27px 28px; place-items: center; }
.plus, .minus { width: 11px; height: 3px; background: #666; }
.plus { background: linear-gradient(#666, #666) center / 3px 11px no-repeat, linear-gradient(#666, #666) center / 11px 3px no-repeat; height: 11px; }
.show-list { position: absolute; left: 428px; top: 630px; display: flex; align-items: center; gap: 13px; width: 140px; height: 37px; padding: 11px 0 0 16px; border-radius: 3px 3px 0 0; background: #fff; color: #333; font-size: 18.900px; white-space: nowrap; }
.show-list svg { margin-top: -4px; }
.attribution { position: absolute; right: 0; bottom: 0; display: flex; gap: 12px; height: 14px; padding: 0 6px 0 5px; background: rgba(245, 245, 245, .75); color: #444; font: 500 9.900px/12px Roboto, sans-serif; white-space: nowrap; }

.offers { display: flex; gap: 25px; padding: 12px 0 0 13px; }
.card { width: 224px; height: 200px; padding: 68px 10px 0; border: 1px solid #c3c3c3; flex: none; }
.thumb { display: flex; align-items: center; justify-content: center; width: 24px; height: 24px; margin: 0 auto; border: 1px solid; border-color: #000 #aaa #aaa #000; }
.thumb svg { width: 12px; height: 14px; }
.card h3 { margin: 70px 0 0; color: #3c96c3; font-size: 16px; font-weight: 600; line-height: 22px; }
```
